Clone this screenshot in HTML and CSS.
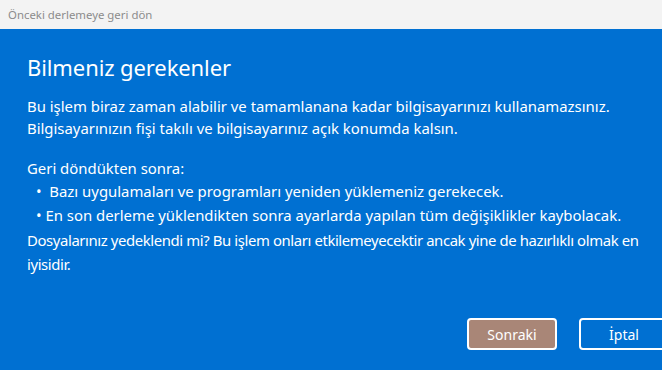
FILE: index.html
```html
<!doctype html>
<html>
<head>
    <meta charset="UTF-8">
    <title>Önceki derlemeye geri dön</title>
    <link rel="stylesheet" href="styles.css">
</head>
<body>
<div class="window">
    <div class="titlebar">Önceki derlemeye geri dön</div>
    <div class="content">
        <h1 class="heading">Bilmeniz gerekenler</h1>
        <p class="para">Bu işlem biraz zaman alabilir ve tamamlanana kadar bilgisayarınızı kullanamazsınız.<br>Bilgisayarınızın fişi takılı ve bilgisayarınız açık konumda kalsın.</p>
        <p class="para lead">Geri döndükten sonra:</p>
        <ul class="list">
            <li>&bull;&nbsp; Bazı uygulamaları ve programları yeniden yüklemeniz gerekecek.</li>
            <li>&bull; En son derleme yüklendikten sonra ayarlarda yapılan tüm değişiklikler kaybolacak.</li>
        </ul>
        <p class="para last">Dosyalarınız yedeklendi mi? Bu işlem onları etkilemeyecektir ancak yine de hazırlıklı olmak en<br>iyisidir.</p>
        <div class="actions">
            <button class="btn primary">Sonraki</button>
            <button class="btn">İptal</button>
        </div>
    </div>
</div>
</body>
</html>
```

FILE: styles.css
```css
* {
    margin: 0;
    padding: 0;
    box-sizing: border-box;
}

body {
    background: #0070d2;
    overflow: hidden;
    font-family: "Noto Sans", "Open Sans", sans-serif;
}

.window {
    width: 662px;
    height: 370px;
    display: flex;
    flex-direction: column;
}

.titlebar {
    height: 29px;
    background: #f3f3f3;
    color: #8c8c8c;
    font-size: 11.4px;
    line-height: 29px;
    padding-left: 8px;
}

.content {
    flex: 1;
    background: #0070d2;
    color: #fff;
    padding: 21px 0 0 27px;
    display: flex;
    flex-direction: column;
}

.heading {
    font-size: 22px;
    font-weight: 400;
    line-height: 34px;
    letter-spacing: -0.1px;
}

.para {
    font-size: 14.9px;
    line-height: 22px;
    margin-top: 11px;
    white-space: nowrap;
}

.para.lead {
    margin-top: 18px;
}

.list {
    list-style: none;
    padding-left: 9px;
    font-size: 14.9px;
    line-height: 24px;
    white-space: nowrap;
}

.para.last {
    margin-top: 1px;
    line-height: 24px;
    letter-spacing: -0.4px;
}

.actions {
    margin-top: auto;
    margin-bottom: 20px;
    display: flex;
    gap: 22px;
    padding-left: 440px;
}

.btn {
    width: 90px;
    height: 32px;
    border: 2px solid #fff;
    border-radius: 4px;
    background: #0070d2;
    color: #fff;
    font-family: "Noto Sans", "Open Sans", sans-serif;
    font-size: 14px;
    flex-shrink: 0;
}

.btn.primary {
    background: #a98677;
}
```
